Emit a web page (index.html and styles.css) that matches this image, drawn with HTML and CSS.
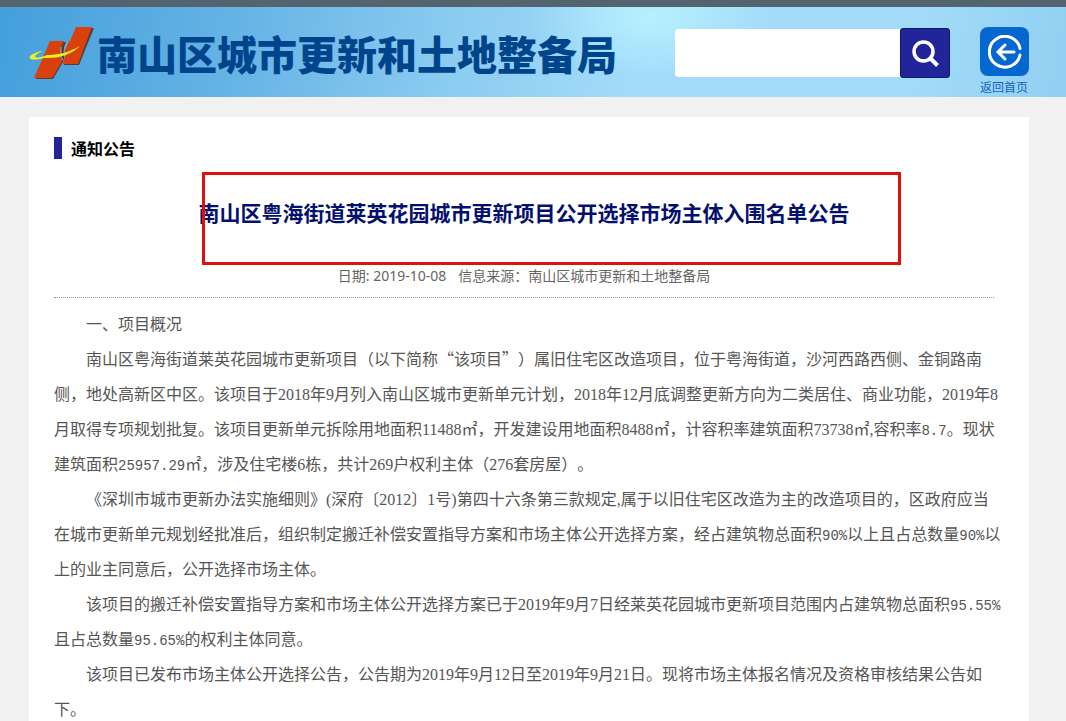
FILE: index.html
```html
<!DOCTYPE html>
<html lang="zh-CN">
<head>
    <meta charset="UTF-8">
    <meta name="viewport" content="width=device-width, initial-scale=1.0">
    <title>南山区城市更新和土地整备局</title>
    <link rel="stylesheet" href="styles.css">
</head>
<body>
    <header class="header">
        <div class="header-inner">
            <div class="brand">
                <svg class="logo" width="66" height="54" viewBox="0 0 66 54" aria-hidden="true">
                    <path d="M22 15h15l-2 5v12l-1 3-10 17H7z" fill="#5b3a3a"/>
                    <path d="M48 1h17L50 38H35z" fill="#5b3a3a"/>
                    <path d="M21 14h14l-3 6v10l2 3-11 18H5z" fill="#d8400c"/>
                    <path d="M47 0h16L49 37H34l2-8-1-5 4-9 2-1z" fill="#d8400c"/>
                    <path d="M32 20v10l2 3M36 29l-1-5 4-9" fill="none" stroke="#70bce9"/>
                    <path d="M14 24C-4 27-4 36 15 31 31 32 44 26 51 19 39 26 28 28 18 28 3 34 3 28 14 24z" fill="#f4f01c"/>
                </svg>
                <span class="brand-name">南山区城市更新和土地整备局</span>
            </div>
            <form class="search">
                <input type="text" class="search-input" name="keyword" aria-label="搜索">
                <button type="submit" class="search-button" aria-label="搜索">
                    <svg width="28" height="28" viewBox="0 0 28 28" fill="none" stroke="#fff" aria-hidden="true">
                        <circle cx="12.500" cy="12.500" r="9.500" stroke-width="3.500"/>
                        <path d="M19.500 19.500l7 7" stroke-width="4"/>
                    </svg>
                </button>
            </form>
            <a class="home" href="#">
                <span class="home-icon">
                    <svg width="34" height="34" viewBox="0 0 34 34" fill="none" stroke="#fff" stroke-width="3" stroke-linecap="round" aria-hidden="true">
                        <path d="M32 13.500A15.500 15.500 0 1 0 32 20"/>
                        <path d="M26 17H11M17 10l-7 7 7 7"/>
                    </svg>
                </span>
                <span>返回首页</span>
            </a>
        </div>
    </header>

    <div class="page">
        <main class="container">
            <h2>通知公告</h2>
            <div class="title">
                <h1>南山区粤海街道莱英花园城市更新项目公开选择市场主体入围名单公告</h1>
                <div class="mark"></div>
            </div>
            <div class="info">
                <span>日期: 2019-10-08</span>
                <span>信息来源：南山区城市更新和土地整备局</span>
            </div>
            <div class="content">
                <p>一、项目概况</p>
                <p>南山区粤海街道莱英花园城市更新项目（以下简称<span class="quote">“该项目”</span>）属旧住宅区改造项目，位于粤海街道，沙河西路西侧、金铜路南侧，地处高新区中区。该项目于2018年9月列入南山区城市更新单元计划，2018年12月底调整更新方向为二类居住、商业功能，2019年8月取得专项规划批复。该项目更新单元拆除用地面积11488㎡，开发建设用地面积8488㎡，计容积率建筑面积73738㎡,容积率<span class="num">8.7</span>。现状建筑面积<span class="num">25957.29</span>㎡，涉及住宅楼6栋，共计269户权利主体（276套房屋）。</p>
                <p>《深圳市城市更新办法实施细则》(深府〔2012〕1号)第四十六条第三款规定,属于以旧住宅区改造为主的改造项目的，区政府应当在城市更新单元规划经批准后，组织制定搬迁补偿安置指导方案和市场主体公开选择方案，经占建筑物总面积<span class="num">90%</span>以上且占总数量<span class="num">90%</span>以上的业主同意后，公开选择市场主体。</p>
                <p>该项目的搬迁补偿安置指导方案和市场主体公开选择方案已于2019年9月7日经莱英花园城市更新项目范围内占建筑物总面积<span class="num">95.55%</span>且占总数量<span class="num">95.65%</span>的权利主体同意。</p>
                <p>该项目已发布市场主体公开选择公告，公告期为2019年9月12日至2019年9月21日。现将市场主体报名情况及资格审核结果公告如下。</p>
            </div>
        </main>
    </div>
</body>
</html>
```
FILE: styles.css
```css
* {
    box-sizing: border-box;
}

body {
    margin: 0;
    background-color: #f1f1f1;
    font-family: "Noto Sans CJK SC", sans-serif;
    text-spacing-trim: space-all;
}

.header {
    border-top: 7px solid #54646f;
    background-image: radial-gradient(ellipse 120px 60px at 61% 10px, rgba(185, 243, 255, 0.9), rgba(185, 243, 255, 0)),
        linear-gradient(100deg, #449fdb 0%, #65b3e5 22%, #8acbf0 42%, #a3dcfa 60%, #a2dcf8 85%, #91cff2 100%);
}

.header-inner {
    display: flex;
    align-items: flex-start;
    max-width: 1008px;
    height: 90px;
    margin: auto;
    padding-top: 20px;
}

.brand {
    display: flex;
    align-items: flex-start;
    flex: 1;
    white-space: nowrap;
}

.logo {
    flex: none;
    margin-right: 2px;
}

.brand-name {
    color: #00458c;
    font-size: 40px;
    font-weight: 900;
    line-height: 52px;
}

.search {
    display: flex;
    align-items: center;
    margin: 1px 30px 0 0;
}

.search-input {
    width: 225px;
    height: 48px;
    padding: 0 10px;
    border: none;
    border-radius: 3px 0 0 3px;
    background-color: #fff;
    font-size: 16px;
}

.search-button {
    display: flex;
    align-items: center;
    justify-content: center;
    width: 50px;
    height: 50px;
    padding: 0;
    border: 1px solid #0c1b70;
    border-radius: 3px;
    background-color: #22259a;
    cursor: pointer;
}

.home {
    display: flex;
    flex-direction: column;
    margin-right: 8px;
    color: #1262c0;
    font-size: 12px;
    line-height: 22px;
    text-decoration: none;
}

.home-icon {
    display: flex;
    align-items: center;
    justify-content: center;
    width: 49px;
    height: 49px;
    border-radius: 8px;
    background-color: #0568d0;
}

.page {
    max-width: 1008px;
    margin: auto;
    padding: 20px 8px 0 0;
}

.container {
    padding: 20px 35px 0 25px;
    background-color: #fff;
}

h2 {
    margin: 0;
    padding-left: 9px;
    border-left: 8px solid #22259a;
    color: #000;
    font-size: 16px;
    font-weight: 700;
    line-height: 22px;
}

.title {
    position: relative;
    padding: 36px 0;
}

h1 {
    margin: 0;
    color: #04106e;
    font-size: 21px;
    font-weight: 700;
    line-height: 34px;
    text-align: center;
}

/* Red frame over the title */
.mark {
    position: absolute;
    top: 13px;
    left: 148px;
    right: 93px;
    height: 93px;
    border: 3px solid #e01010;
}

.info {
    display: flex;
    justify-content: center;
    gap: 12px;
    padding-bottom: 10px;
    border-bottom: 1px dotted #999;
    color: #666;
    font-family: "Noto Sans", "Noto Sans CJK SC", sans-serif;
    font-size: 14px;
    line-height: 22px;
}

.content {
    margin-right: -8px;
    padding-top: 9px;
    color: #555;
    font-family: "Liberation Serif", "Noto Sans CJK SC", serif;
    font-size: 16px;
    line-height: 35px;
}

.content p {
    margin: 0;
    text-indent: 2em;
}

.quote {
    font-family: "Noto Sans CJK SC", sans-serif;
    line-height: 16px;
}

/* Fixed-width figures for decimals and rates */
.num {
    font-family: "Liberation Mono", monospace;
    font-size: 14px;
    line-height: 16px;
}
```
